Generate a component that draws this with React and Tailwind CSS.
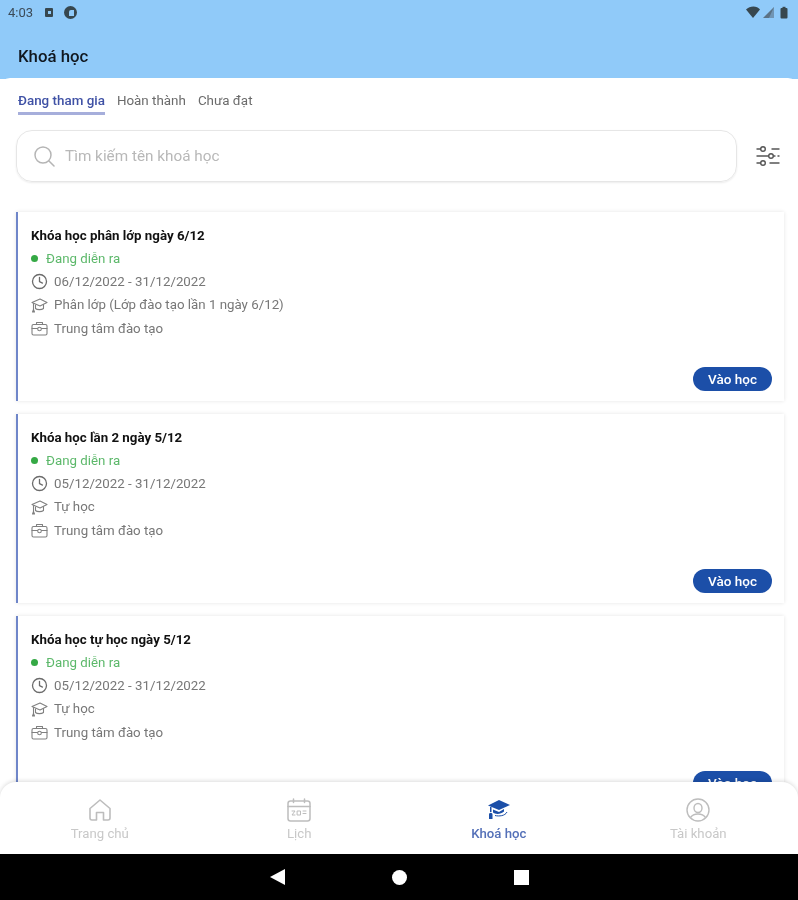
import React from "react";

const Clock = () => (
  <svg width="17" height="17" viewBox="0 0 17 17" fill="none" stroke="#6b6b6b" strokeWidth="1.3" strokeLinecap="round" strokeLinejoin="round">
    <circle cx="8.500" cy="8.500" r="7" />
    <path d="M8.500 4.300v4.400l3 1.400" />
  </svg>
);
const Cap = () => (
  <svg width="17" height="17" viewBox="0 0 17 17" fill="none" stroke="#808080" strokeWidth="1.1" strokeLinecap="round" strokeLinejoin="round">
    <path d="M1 5.500 9 2l7 3.500-7 3.500z" />
    <path d="M4.500 8v3.500c1.500 1.400 6 1.600 8 0V7.500" />
    <path d="M2.500 6.500v6" />
    <path d="M1.500 15h2l-1-2.500z" />
  </svg>
);
const Briefcase = () => (
  <svg width="17" height="17" viewBox="0 0 17 17" fill="none" stroke="#808080" strokeWidth="1.1" strokeLinecap="round" strokeLinejoin="round">
    <rect x="1" y="4.500" width="15" height="10.500" rx="1.500" />
    <path d="M5.500 4.500V2.500h6v2" />
    <path d="M1 8.500h5.500M10.500 8.500H16" />
    <circle cx="8.500" cy="9" r="1.800" />
  </svg>
);

function Row({ icon, children }) {
  return (
    <div className="flex items-center h-[23.4px]">
      <span className="w-[23px] flex justify-start shrink-0">{icon}</span>
      <span className="text-[13.3px] text-[#777777]">{children}</span>
    </div>
  );
}

function Card({ title, date, type }) {
  return (
    <div className="relative h-[189px] shrink-0 bg-white border-l-2 border-[#6f86c9] shadow-[0_0_4px_rgba(0,0,0,0.11)] pl-[13px] pr-[12px] pt-[14px]">
      <div className="text-[13.3px] font-bold text-[#111] leading-[20px] h-[21px]">{title}</div>
      <div className="flex items-center h-[23px]">
        <span className="w-[7px] h-[7px] rounded-full bg-[#35a945] mr-[8px]" />
        <span className="text-[13.3px] text-[#5cb86a]">Đang diễn ra</span>
      </div>
      <Row icon={<Clock />}>{date}</Row>
      <Row icon={<Cap />}>{type}</Row>
      <Row icon={<Briefcase />}>Trung tâm đào tạo</Row>
      <div className="absolute right-[12px] top-[155px] w-[79px] h-[24px] rounded-full bg-[#1c4fa8] text-white text-[13.5px] font-medium flex items-center justify-center">
        Vào học
      </div>
    </div>
  );
}

function NavItem({ icon, label, active }) {
  return (
    <div className="flex-1 flex flex-col items-center">
      <div className="h-[28px] flex items-center justify-center">{icon}</div>
      <div className={"text-[13.2px] mt-[2px] leading-[16px] " + (active ? "text-[#5470b8] font-medium" : "text-[#c8c8c8]")}>{label}</div>
    </div>
  );
}

export default function App() {
  return (
    <div className="w-[798px] h-[900px] flex flex-col overflow-hidden bg-white blur-[0.6px]" style={{ fontFamily: "Roboto, 'Noto Sans', sans-serif" }}>
      <div className="h-[79px] shrink-0 bg-[#90caf9] px-[8px] pt-[4px] flex flex-col">
        <div className="h-[17px] flex items-center text-[#3c4b58]">
          <span className="text-[13px]">4:03</span>
          <span className="ml-[12px] w-[8px] h-[9px] bg-[#37474f] rounded-[1px] flex items-center justify-center">
            <span className="w-[3px] h-[3px] bg-[#90caf9]" />
          </span>
          <span className="ml-[11px] w-[13px] h-[13px] rounded-full bg-[#37474f] flex items-center justify-center">
            <span className="w-[5px] h-[6px] bg-[#90caf9] rounded-tl-[2px] ml-[2px]" />
          </span>
          <span className="flex-1" />
          <svg width="44" height="14" viewBox="0 0 44 14" fill="#37474f">
            <path d="M0 3.500C4-.5 11-.5 14 3.500L7 12z" />
            <path d="M28 1v11H17z" fill="#5b7285" />
            <path d="M28 1v11h-5z" opacity="0.4" fill="#90caf9" />
            <rect x="34.500" y="2" width="7" height="10.500" rx="1" />
            <rect x="36.500" y="0.800" width="3" height="2" />
          </svg>
        </div>
        <div className="ml-[10px] mt-[24px] text-[16.8px] font-medium text-[#10171f] leading-[22px]">Khoá học</div>
      </div>

      <div className="-mt-[1px] relative z-[1] flex-1 min-h-0 rounded-t-[10px] bg-white flex flex-col overflow-hidden">
        <div className="flex gap-[12px] pl-[18px] pt-[15px] text-[13.4px] leading-[16px]">
          <div className="pb-[4px] border-b-[3px] border-[#a6aedb] text-[#3f51a5] font-medium h-[22px]">Đang tham gia</div>
          <div className="text-[#6b6b6b]">Hoàn thành</div>
          <div className="text-[#6b6b6b]">Chưa đạt</div>
        </div>
        <div className="flex items-center mt-[15px] ml-[16px] mr-[14px]">
          <div className="w-[721px] h-[52px] rounded-[16px] border border-[#e6e6e6] shadow-[0_1px_2px_rgba(0,0,0,0.08)] flex items-center pl-[16px]">
            <svg width="22" height="22" viewBox="0 0 22 22" fill="none" stroke="#b5b5b5" strokeWidth="1.5" strokeLinecap="round">
              <circle cx="10" cy="10" r="8" />
              <path d="M16 16l5 5" />
            </svg>
            <span className="ml-[10px] text-[15.3px] text-[#b8b8b8]">Tìm kiếm tên khoá học</span>
          </div>
          <svg className="ml-[19px]" width="24" height="24" viewBox="0 0 24 24" fill="none" stroke="#555" strokeWidth="1.4" strokeLinecap="round">
            <circle cx="7" cy="5" r="2.300" />
            <path d="M16 5h7M1 5h3.500" />
            <circle cx="15" cy="12" r="2.300" />
            <path d="M1 12h11.500M18 12h1M22 12h1" />
            <circle cx="7" cy="19" r="2.300" />
            <path d="M14 19h9M1 19h3.500" />
          </svg>
        </div>
        <div className="mt-[30px] mr-[14px] ml-[16px] flex flex-col gap-[13px]">
          <Card title="Khóa học phân lớp ngày 6/12" date="06/12/2022 - 31/12/2022" type="Phân lớp (Lớp đào tạo lần 1 ngày 6/12)" />
          <Card title="Khóa học lần 2 ngày 5/12" date="05/12/2022 - 31/12/2022" type="Tự học" />
          <Card title="Khóa học tự học ngày 5/12" date="05/12/2022 - 31/12/2022" type="Tự học" />
        </div>
      </div>

      <div className="relative z-[2] -mt-[16px] h-[72px] shrink-0 bg-white rounded-t-[16px] shadow-[0_-1px_4px_rgba(0,0,0,0.14)] flex pt-[14px]">
        <NavItem
          label="Trang chủ"
          icon={
            <svg width="24" height="24" viewBox="0 0 24 24" fill="none" stroke="#bdbdbd" strokeWidth="1.6" strokeLinejoin="round">
              <path d="M2 10.500 12 2l10 8.500V20a2 2 0 0 1-2 2h-4.500v-7.500h-7V22H4a2 2 0 0 1-2-2z" />
            </svg>
          }
        />
        <NavItem
          label="Lịch"
          icon={
            <svg width="24" height="24" viewBox="0 0 24 24" fill="none" stroke="#bdbdbd" strokeWidth="1.5" strokeLinecap="round">
              <rect x="1" y="3" width="22" height="20" rx="2.500" />
              <path d="M1 8.500h22M6.500 1v3.500M17.500 1v3.500" />
              <path d="M5 13h3l-3 4h3M10.500 13h3v4h-3zM16 13h3M16 15.500h3" strokeWidth="1" />
            </svg>
          }
        />
        <NavItem
          active
          label="Khoá học"
          icon={
            <svg width="24" height="22" viewBox="0 0 24 22" fill="#1c4fa8">
              <path d="M1 6.500 12 1l11 5-11 5z" />
              <path d="M6 10.500v3c2 2 8 2 11-1v-2.500L12 13z" />
              <path d="M3 8h1.500v5H3z" />
              <path d="M2 20v-4.500c0-1 .8-1.800 1.700-1.800s1.800.8 1.800 1.800V20z" />
              <path d="M8 16.500c4 1 10 .5 12-3.500" fill="none" stroke="#1c4fa8" strokeWidth="1" />
            </svg>
          }
        />
        <NavItem
          label="Tài khoản"
          icon={
            <svg width="24" height="24" viewBox="0 0 24 24" fill="none" stroke="#bdbdbd" strokeWidth="1.4">
              <circle cx="12" cy="12" r="11" />
              <ellipse cx="12" cy="10" rx="4" ry="4.500" />
              <path d="M4.500 19.500c2-3 4.500-3.500 7.500-3.500s5.500.5 7.500 3.500" />
            </svg>
          }
        />
      </div>

      <div className="h-[46px] shrink-0 bg-black flex items-center">
        <div className="w-[798px] flex items-center justify-center gap-[107px]">
          <svg width="15" height="16" viewBox="0 0 15 16" fill="#fff"><path d="M15 0v16L0 8z" /></svg>
          <span className="w-[15px] h-[15px] rounded-full bg-white" />
          <span className="w-[15px] h-[15px] bg-white" />
        </div>
      </div>
    </div>
  );
}
